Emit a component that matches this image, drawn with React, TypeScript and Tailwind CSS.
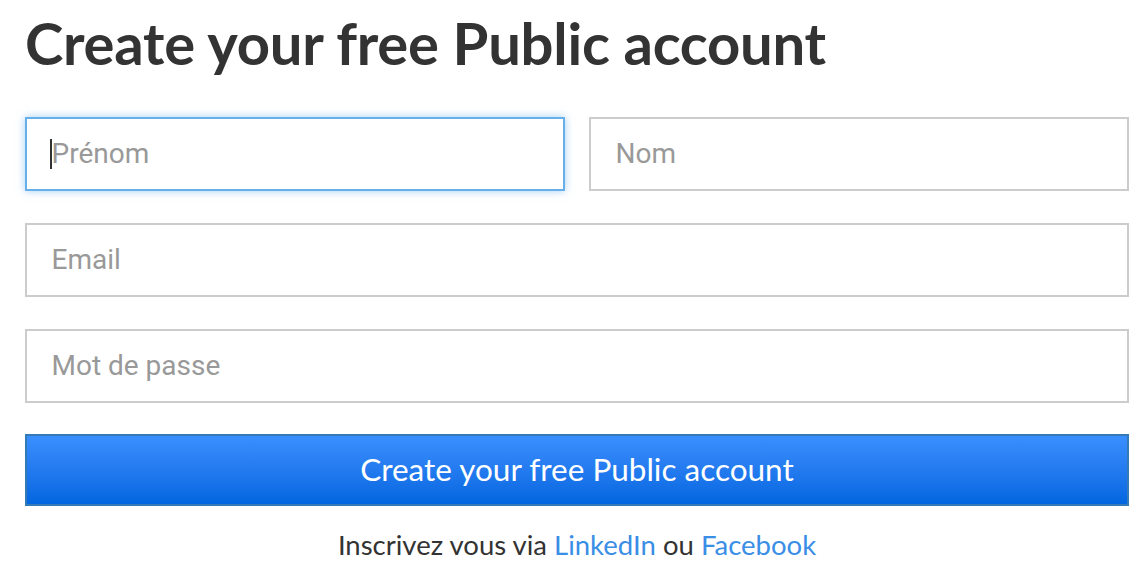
import type { ReactNode } from 'react';

/* ─── Field ─── */

function Field({
    placeholder,
    focused = false,
    type = 'text',
}: {
    placeholder: string;
    focused?: boolean;
    type?: string;
}) {
    return (
        <div
            className={`flex h-[74px] items-center border-2 bg-white pl-[23px] ${
                focused
                    ? 'border-[#66afe9] shadow-[0_0_8px_rgba(102,175,233,0.6)]'
                    : 'border-[#cccccc]'
            }`}
        >
            {focused ? <span className="h-[30px] w-[1.5px] shrink-0 bg-[#333]" /> : null}
            <input
                type={type}
                placeholder={placeholder}
                className={`w-full bg-transparent text-[28px] text-[#333] outline-none placeholder:text-[#999] ${
                    focused ? '' : 'pl-[1.5px]'
                }`}
            />
        </div>
    );
}

function Row({ children }: { children: ReactNode }) {
    return <div className="flex gap-[24px]">{children}</div>;
}

/* ─── Page ─── */

export default function App() {
    return (
        <div className="min-h-screen bg-white font-['Lato','Liberation_Sans',sans-serif]">
            <div className="ml-[25px] w-[1104px] pt-[8px]">
                <h1 className="text-[58px] leading-[70px] font-bold tracking-[-0.25px] text-[#333]">
                    Create your free Public account
                </h1>

                <form className="mt-[39px] flex flex-col gap-[32px] font-['Roboto',sans-serif]">
                    <Row>
                        <div className="flex-1">
                            <Field placeholder="Prénom" focused />
                        </div>
                        <div className="flex-1">
                            <Field placeholder="Nom" />
                        </div>
                    </Row>
                    <Field placeholder="Email" type="email" />
                    <Field placeholder="Mot de passe" type="password" />
                    <button
                        type="button"
                        className="-mt-[1px] h-[72px] border-2 border-[#337ab7] bg-gradient-to-b from-[#3a8ffe] to-[#0066e0] font-['Lato',sans-serif] text-[31.5px] text-white"
                    >
                        Create your free Public account
                    </button>
                </form>

                <p className="mt-[18px] text-center text-[27.5px] text-[#333]">
                    Inscrivez vous via{' '}
                    <a href="#" className="text-[#3a8ee6]">
                        LinkedIn
                    </a>{' '}
                    ou{' '}
                    <a href="#" className="text-[#3a8ee6]">
                        Facebook
                    </a>
                </p>
            </div>
        </div>
    );
}
